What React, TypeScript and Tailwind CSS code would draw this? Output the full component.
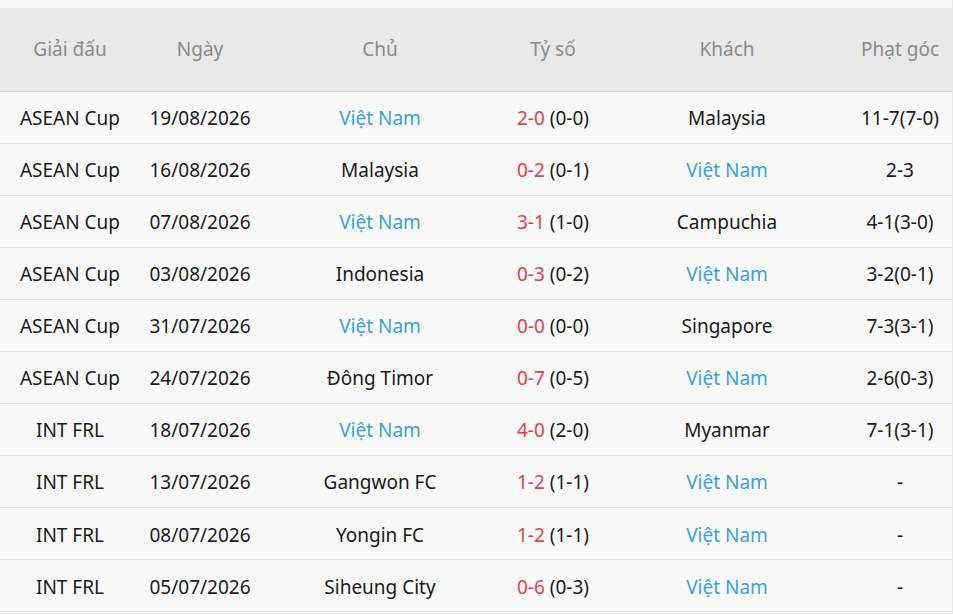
const rows = [
  { league: "ASEAN Cup", date: "19/08/2026", home: "Việt Nam", score: "2-0", half: "(0-0)", away: "Malaysia", corner: "11-7(7-0)" },
  { league: "ASEAN Cup", date: "16/08/2026", home: "Malaysia", score: "0-2", half: "(0-1)", away: "Việt Nam", corner: "2-3" },
  { league: "ASEAN Cup", date: "07/08/2026", home: "Việt Nam", score: "3-1", half: "(1-0)", away: "Campuchia", corner: "4-1(3-0)" },
  { league: "ASEAN Cup", date: "03/08/2026", home: "Indonesia", score: "0-3", half: "(0-2)", away: "Việt Nam", corner: "3-2(0-1)" },
  { league: "ASEAN Cup", date: "31/07/2026", home: "Việt Nam", score: "0-0", half: "(0-0)", away: "Singapore", corner: "7-3(3-1)" },
  { league: "ASEAN Cup", date: "24/07/2026", home: "Đông Timor", score: "0-7", half: "(0-5)", away: "Việt Nam", corner: "2-6(0-3)" },
  { league: "INT FRL", date: "18/07/2026", home: "Việt Nam", score: "4-0", half: "(2-0)", away: "Myanmar", corner: "7-1(3-1)" },
  { league: "INT FRL", date: "13/07/2026", home: "Gangwon FC", score: "1-2", half: "(1-1)", away: "Việt Nam", corner: "-" },
  { league: "INT FRL", date: "08/07/2026", home: "Yongin FC", score: "1-2", half: "(1-1)", away: "Việt Nam", corner: "-" },
  { league: "INT FRL", date: "05/07/2026", home: "Siheung City", score: "0-6", half: "(0-3)", away: "Việt Nam", corner: "-" },
];

function Team({ name }: { name: string }) {
  return <span className={name === "Việt Nam" ? "text-[#3d9ee0]" : "text-[#1a1a1a]"}>{name}</span>;
}

export default function App() {
  return (
    <div className="w-[953px] h-[614px] bg-[#f9f9f9] pt-2 font-['Noto_Sans',sans-serif] text-[19px] border-r border-[#e6e6e6]">
      <table className="w-full border-collapse table-fixed">
        <colgroup>
          <col className="w-[140px]" />
          <col className="w-[120px]" />
          <col className="w-[240px]" />
          <col className="w-[106px]" />
          <col className="w-[242px]" />
          <col />
        </colgroup>
        <thead>
          <tr className="h-[83px] bg-[#e9e9e9] text-[#8a8a8a] border-b border-[#d9d9d9]">
            <th className="font-normal">Giải đấu</th>
            <th className="font-normal">Ngày</th>
            <th className="font-normal">Chủ</th>
            <th className="font-normal">Tỷ số</th>
            <th className="font-normal">Khách</th>
            <th className="font-normal">Phạt góc</th>
          </tr>
        </thead>
        <tbody>
          {rows.map((r, i) => (
            <tr key={i} className="h-[52.1px] border-b border-[#e3e3e3] text-center text-[#1a1a1a]">
              <td className="pt-0.5">{r.league}</td>
              <td className="pt-0.5">{r.date}</td>
              <td className="pt-0.5"><Team name={r.home} /></td>
              <td className="pt-0.5 whitespace-nowrap">
                <span className="text-[#e5404a]">{r.score}</span> {r.half}
              </td>
              <td className="pt-0.5"><Team name={r.away} /></td>
              <td className="pt-0.5">{r.corner}</td>
            </tr>
          ))}
        </tbody>
      </table>
    </div>
  );
}
